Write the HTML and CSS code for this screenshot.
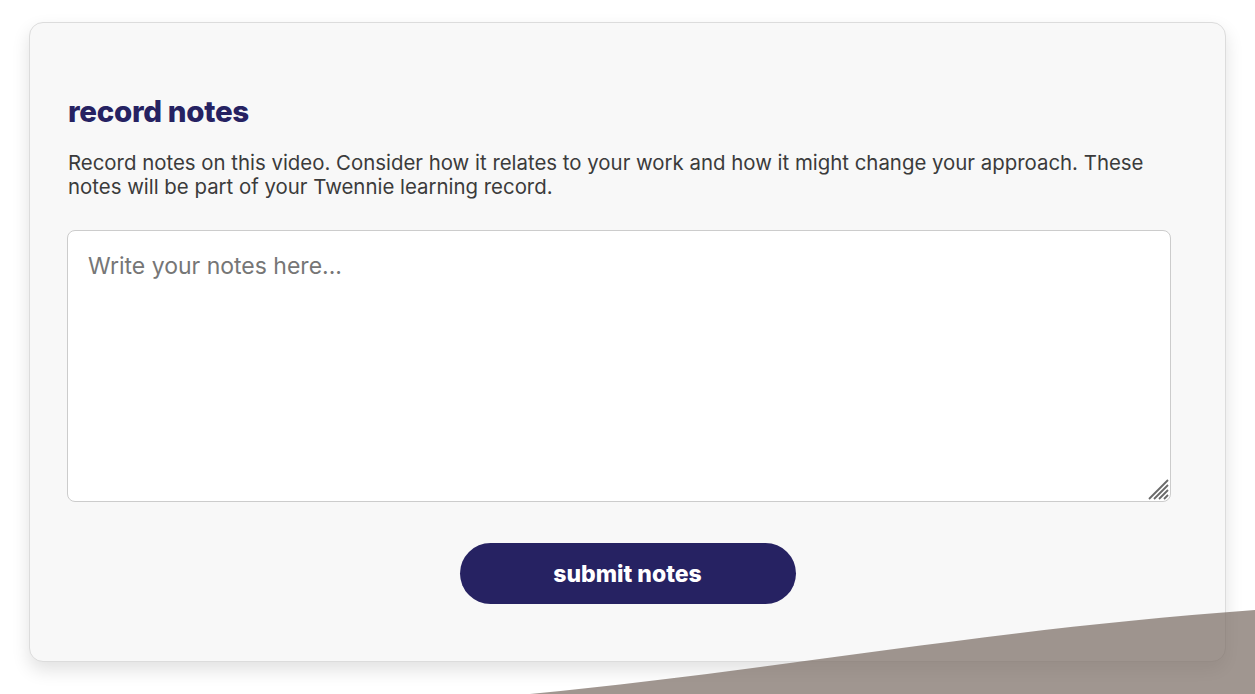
FILE: index.html
```html
<!DOCTYPE html>
<html lang="en">
<head>
<meta charset="utf-8">
<title>record notes</title>
<link rel="stylesheet" href="styles.css">
</head>
<body>
<main class="page">
  <section class="card">
    <h2 class="title">record notes</h2>
    <p class="intro">Record notes on this video. Consider how it relates to your work and how it might change your approach. These notes will be part of your Twennie learning record.</p>
    <div class="field">
      <textarea class="notes" placeholder="Write your notes here..."></textarea>
      <svg class="grip" viewBox="0 0 22 22" aria-hidden="true">
        <path d="M2 21 L21 2 M7 21 L21 7 M12 21 L21 12 M17 21 L21 17"/>
      </svg>
    </div>
    <div class="actions">
      <button class="submit" type="button">submit notes</button>
    </div>
  </section>
  <svg class="wave" viewBox="0 0 725 84" preserveAspectRatio="none" aria-hidden="true">
    <path d="M0 84 C 250 60, 450 20, 725 0 L725 84 Z"/>
  </svg>
</main>
</body>
</html>
```
FILE: styles.css
```css
html, body {
  margin: 0;
  padding: 0;
  background: #ffffff;
  height: 100%;
  overflow: hidden;
}
.page {
  position: relative;
  height: 694px;
  padding: 22px 29px 0 29px;
  box-sizing: border-box;
  font-family: "Inter", "Lato", sans-serif;
}
.card {
  background: #f8f8f8;
  border: 1px solid #dcdcdc;
  border-radius: 14px;
  box-shadow: 0 8px 18px rgba(0,0,0,0.12);
  height: 640px;
  box-sizing: border-box;
  padding: 72px 54px 0 38px;
  display: flex;
  flex-direction: column;
}
.title {
  margin: 0;
  font-size: 29.5px;
  font-weight: 800;
  color: #262262;
  line-height: 32px;
  letter-spacing: -0.3px;
}
.intro {
  margin: 24px 0 0 0;
  font-size: 20.4px;
  line-height: 24px;
  color: #3b3b3b;
}
.field {
  position: relative;
  margin-top: 31px;
  margin-left: -1px;
}
.notes {
  display: block;
  height: 272px;
  width: 100%;
  box-sizing: border-box;
  border: 1px solid #cccccc;
  border-radius: 8px;
  background: #ffffff;
  padding: 21px 20px;
  font-family: inherit;
  font-size: 23px;
  color: #333;
  resize: none;
}
.notes::placeholder {
  color: #767676;
}
.grip {
  position: absolute;
  right: 2px;
  bottom: 2px;
  width: 22px;
  height: 22px;
}
.grip path {
  stroke: #6a6a6a;
  stroke-width: 1.8;
  fill: none;
}
.actions {
  display: flex;
  justify-content: center;
  margin-top: 41px;
  padding-left: 16px;
}
.submit {
  width: 336px;
  height: 61px;
  border: none;
  border-radius: 31px;
  background: #262262;
  color: #ffffff;
  font-family: inherit;
  font-size: 23px;
  font-weight: 800;
  padding-top: 2px;
}
.wave {
  position: absolute;
  left: 530px;
  top: 610px;
  width: 725px;
  height: 84px;
}
.wave path {
  fill: rgba(120,105,97,0.7);
}
```
